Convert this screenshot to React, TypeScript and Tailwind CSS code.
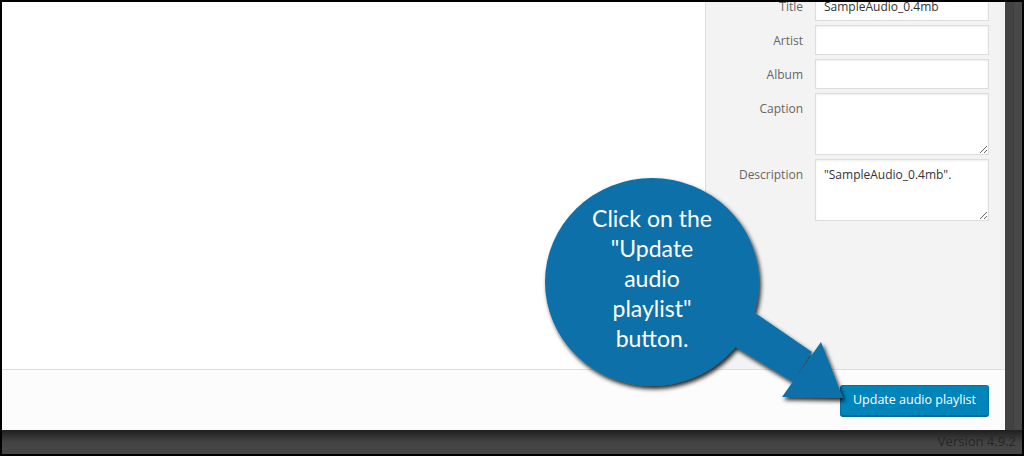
import React from "react";

const ui = { fontFamily: '"Open Sans", "Noto Sans", Arial, sans-serif' };
const callout = { fontFamily: 'Lato, "Open Sans", Arial, sans-serif' };

function Row({ label, children, labelPad = "pt-[7px]" }: { label: string; children: React.ReactNode; labelPad?: string }) {
  return (
    <div className="flex mb-[4px]">
      <div className={`w-[97px] shrink-0 text-right text-[12px] leading-[18px] text-[#666] ${labelPad}`}>{label}</div>
      <div className="ml-[12px] w-[174px]">{children}</div>
    </div>
  );
}

const inputCls =
  "block w-[174px] h-[30px] border border-[#ddd] bg-white px-[8px] text-[12px] text-[#333] shadow-[inset_0_1px_2px_rgba(0,0,0,0.07)] outline-none";
const taCls =
  "block w-[174px] h-[62px] border border-[#ddd] bg-white px-[8px] py-[6px] text-[12px] leading-[18px] text-[#333] shadow-[inset_0_1px_2px_rgba(0,0,0,0.07)] outline-none";

export default function App() {
  return (
    <div className="relative w-[1024px] h-[456px] bg-black p-[2px] overflow-hidden" style={ui}>
      <div className="flex flex-col w-[1020px] h-[452px]">
        <div className="flex h-[428px]">
          {/* modal */}
          <div className="flex flex-col w-[1003px] h-[428px] bg-white">
            <div className="flex h-[367px]">
              <div className="w-[703px] bg-white" />
              <div className="w-[300px] border-l border-[#ddd] bg-[#f3f3f3] overflow-hidden">
                <div className="-mt-[11px]">
                  <Row label="Title">
                    <input className={inputCls} defaultValue="SampleAudio_0.4mb" readOnly />
                  </Row>
                  <Row label="Artist">
                    <input className={inputCls} readOnly />
                  </Row>
                  <Row label="Album">
                    <input className={inputCls} readOnly />
                  </Row>
                  <Row label="Caption">
                    <textarea className={taCls} readOnly />
                  </Row>
                  <Row label="Description">
                    <textarea className={taCls} defaultValue={'"SampleAudio_0.4mb".'} readOnly />
                  </Row>
                </div>
              </div>
            </div>
            <div className="flex h-[61px] justify-end border-t border-[#ddd] bg-[#fcfcfc] pt-[15px] pr-[16px]">
              <button className="h-[31px] rounded-[3px] border border-[#0073aa] border-b-[#006799] bg-[#0085ba] px-[12px] text-[12.5px] text-white shadow-[0_1px_0_#006799]">
                Update audio playlist
              </button>
            </div>
          </div>
          {/* background strip */}
          <div className="flex w-[17px] h-[428px] bg-[#454545] shadow-[inset_3px_0_4px_rgba(0,0,0,0.35)]">
            <div className="w-[8px] h-full bg-[#434343]" />
            <div className="w-px h-full bg-[#3e3e3e]" />
            <div className="flex-1 h-full bg-[#484848]" />
          </div>
        </div>
        <div className="flex h-[24px] items-center justify-end bg-gradient-to-b from-[#1f1f1f] via-[#434343] to-[#474747] pr-[6px] text-[13px] text-[#262626]">
          Version 4.9.2
        </div>
      </div>

      {/* callout overlay */}
      <svg className="pointer-events-none absolute left-0 top-0" width="1024" height="456" viewBox="0 0 1024 456">
        <defs>
          <filter id="sh" x="-20%" y="-20%" width="140%" height="140%">
            <feDropShadow dx="2" dy="3" stdDeviation="2" floodColor="#000" floodOpacity="0.85" />
          </filter>
        </defs>
        <g filter="url(#sh)" fill="#0b70a8">
          <ellipse cx="652" cy="282" rx="107" ry="104" />
          <polygon points="742,304 812,352 793,382 724,340" />
          <polygon points="821,342 843,398 782,397" />
        </g>
      </svg>
      <div
        className="absolute left-[552px] top-[203px] w-[200px] text-center text-[23px] leading-[30px] text-white"
        style={callout}
      >
        Click on the
        <br />
        "Update
        <br />
        audio
        <br />
        playlist"
        <br />
        button.
      </div>
    </div>
  );
}
